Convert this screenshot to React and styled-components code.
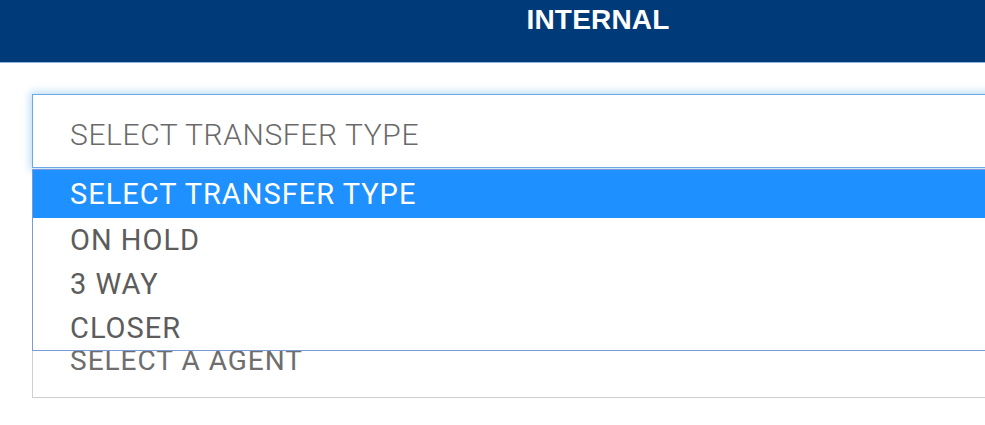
import React, { useState } from 'react';
import styled, { createGlobalStyle } from 'styled-components';

const GlobalStyle = createGlobalStyle`
  html, body {
    margin: 0;
    padding: 0;
    background: #fff;
    overflow: hidden;
  }
  body {
    font-family: Roboto, 'Liberation Sans', sans-serif;
  }
`;

const Page = styled.div`
  width: 1196px;
  min-height: 425px;
  background: #fff;
`;

const Header = styled.div`
  height: 63px;
  background: #003a78;
  border-bottom: 1px solid #8fb3dc;
  box-sizing: border-box;
  display: flex;
  justify-content: center;
  padding-top: 4px;
`;

const Title = styled.h1`
  margin: 0;
  color: #fff;
  font-family: 'Liberation Sans', Arial, sans-serif;
  font-weight: 700;
  font-size: 28px;
  line-height: 32px;
  letter-spacing: 0.2px;
`;

const Form = styled.div`
  padding: 31px 0 0 32px;
  display: flex;
  flex-direction: column;
  gap: 156px;
`;

const Field = styled.div`
  position: relative;
  height: 74px;
  box-sizing: border-box;
  border: 1px solid ${p => (p.focused ? '#6aa9e6' : '#cfcfcf')};
  box-shadow: ${p =>
    p.focused ? '0 0 8px 2px rgba(102, 175, 233, 0.45)' : 'none'};
  background: #fff;
  display: flex;
  align-items: center;
  padding-left: 37px;
`;

const FieldText = styled.span`
  color: #6a6a6a;
  font-family: Roboto, sans-serif;
  font-weight: 300;
  font-size: 30px;
  letter-spacing: 0.6px;
  margin-top: 6px;
  white-space: nowrap;
`;

const AgentText = styled.span`
  color: #6e6e6e;
  font-size: 28px;
  letter-spacing: 1px;
  white-space: nowrap;
  margin-top: -2px;
`;

const OptionList = styled.ul`
  position: absolute;
  top: calc(100% + 2px);
  left: -1px;
  right: -1px;
  margin: 0;
  padding: 0;
  list-style: none;
  background: #fff;
  border: 1px solid #7b9bd8;
  z-index: 2;
`;

const Option = styled.li`
  height: ${p => (p.active ? '48px' : '44px')};
  display: flex;
  align-items: center;
  padding-left: 37px;
  font-family: Roboto, sans-serif;
  font-size: 29px;
  letter-spacing: 1px;
  color: ${p => (p.active ? '#fff' : '#5c5c5c')};
  background: ${p => (p.active ? '#1e90ff' : 'transparent')};
  white-space: nowrap;
`;

const options = ['SELECT TRANSFER TYPE', 'ON HOLD', '3 WAY', 'CLOSER'];

export default function App() {
  const [active] = useState(0);
  return (
    <Page>
      <GlobalStyle />
      <Header>
        <Title>INTERNAL</Title>
      </Header>
      <Form>
        <Field focused>
          <FieldText>SELECT TRANSFER TYPE</FieldText>
          <OptionList>
            {options.map((o, i) => (
              <Option key={o} active={i === active}>
                {o}
              </Option>
            ))}
          </OptionList>
        </Field>
        <Field>
          <AgentText>SELECT A AGENT</AgentText>
        </Field>
      </Form>
    </Page>
  );
}
